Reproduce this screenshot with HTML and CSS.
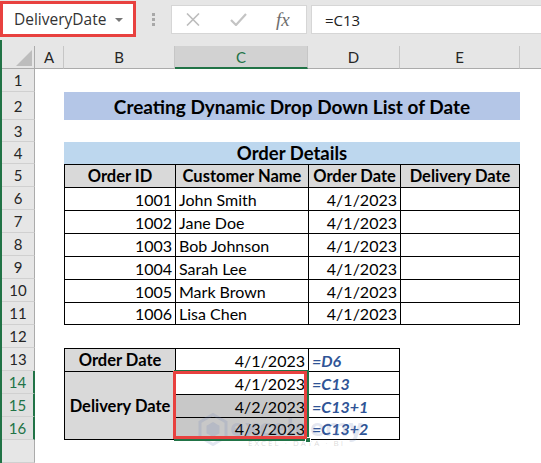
FILE: index.html
```html
<!DOCTYPE html>
<html lang="en">
<head>
<meta charset="utf-8">
<title>Dynamic Drop Down List of Date</title>
<link rel="stylesheet" href="styles.css">
</head>
<body>
<div class="app">
  <div class="fbar">
    <div class="namebox"><span class="nb-text">DeliveryDate</span><span class="nb-arrow"></span></div>
    <div class="grip"><i></i><i></i><i></i></div>
    <div class="btns">
      <svg class="ic-x" width="14" height="13" viewBox="0 0 14 13"><path d="M1 0.5 L13 12.5 M13 0.5 L1 12.5" stroke="#BDBDBD" stroke-width="1.6" fill="none"/></svg>
      <svg class="ic-ok" width="17" height="13" viewBox="0 0 17 13"><path d="M1 7 L6 12 L16 1" stroke="#C4C4C4" stroke-width="2.2" fill="none"/></svg>
      <span class="fx">fx</span>
    </div>
    <div class="finput">=C13</div>
  </div>
  <div class="sheet">
    <div class="grid">
      <!-- column headers -->
      <div class="ch corner"><span class="tri"></span></div>
      <div class="ch">A</div>
      <div class="ch">B</div>
      <div class="ch on">C</div>
      <div class="ch">D</div>
      <div class="ch">E</div>
      <div class="ch last"></div>

      <!-- row 1 -->
      <div class="rh">1</div><div class="span6"></div>
      <!-- row 2 -->
      <div class="rh">2</div><div></div>
      <div class="title span4">Creating Dynamic Drop Down List of Date</div><div></div>
      <!-- row 3 -->
      <div class="rh">3</div><div class="span6"></div>
      <!-- row 4 -->
      <div class="rh">4</div><div></div>
      <div class="subtitle span4">Order Details</div><div></div>
      <!-- row 5 -->
      <div class="rh">5</div><div></div>
      <div class="th b">Order ID</div>
      <div class="th b">Customer Name</div>
      <div class="th b">Order Date</div>
      <div class="th b br">Delivery Date</div>
      <div></div>
      <!-- rows 6-11 -->
      <div class="rh">6</div><div></div>
      <div class="b r">1001</div><div class="b">John Smith</div><div class="b r">4/1/2023</div><div class="b br"></div><div></div>
      <div class="rh">7</div><div></div>
      <div class="b r">1002</div><div class="b">Jane Doe</div><div class="b r">4/1/2023</div><div class="b br"></div><div></div>
      <div class="rh">8</div><div></div>
      <div class="b r">1003</div><div class="b">Bob Johnson</div><div class="b r">4/1/2023</div><div class="b br"></div><div></div>
      <div class="rh">9</div><div></div>
      <div class="b r">1004</div><div class="b">Sarah Lee</div><div class="b r">4/1/2023</div><div class="b br"></div><div></div>
      <div class="rh">10</div><div></div>
      <div class="b r">1005</div><div class="b">Mark Brown</div><div class="b r">4/1/2023</div><div class="b br"></div><div></div>
      <div class="rh">11</div><div></div>
      <div class="b bb r">1006</div><div class="b bb">Lisa Chen</div><div class="b bb r">4/1/2023</div><div class="b br bb"></div><div></div>
      <!-- row 12 -->
      <div class="rh">12</div><div class="span6"></div>
      <!-- row 13 -->
      <div class="rh">13</div><div></div>
      <div class="th b">Order Date</div>
      <div class="b r">4/1/2023</div>
      <div class="b br fm">=D6</div>
      <div class="span2"></div>
      <!-- row 14 -->
      <div class="rh on">14</div><div></div>
      <div class="th b bb merge3">Delivery Date</div>
      <div class="b r">4/1/2023</div>
      <div class="b br fm">=C13</div>
      <div class="span2"></div>
      <!-- row 15 -->
      <div class="rh on">15</div><div></div>
      <div class="b r sel">4/2/2023</div>
      <div class="b br fm">=C13+1</div>
      <div class="span2"></div>
      <!-- row 16 -->
      <div class="rh on">16</div><div></div>
      <div class="b bb r sel">4/3/2023</div>
      <div class="b br bb fm">=C13+2</div>
      <div class="span2"></div>
      <!-- row 17 -->
      <div class="rh"></div><div class="span6"></div>

      <!-- overlays -->
      <div class="watermark">
        <svg width="30" height="33" viewBox="0 0 30 33"><path d="M15 1.5 L28 9 L28 24 L15 31.5 L2 24 L2 9 Z" fill="none" stroke="currentColor" stroke-width="3"/><path d="M15 9 L21.5 12.8 L21.5 20.2 L15 24 L8.5 20.2 L8.5 12.8 Z" fill="currentColor"/></svg>
        <div class="wm-text"><span class="wm-name">exceldemy</span><span class="wm-tag">EXCEL · DATA · BI</span></div>
      </div>
      <div class="selection"></div>
      <div class="handle"></div>
      <div class="redbox"></div>
    </div>
  </div>
</div>
</body>
</html>
```

FILE: styles.css
```css
* { box-sizing: border-box; margin: 0; padding: 0; }
html, body { width: 541px; height: 463px; overflow: hidden; background: #fff; }
body { font-family: Lato, "Liberation Sans", sans-serif; color: #000; }

/* formula bar */
.fbar { height: 40px; background: #E6E6E6; display: flex; align-items: flex-start; }
.namebox {
  width: 136px; height: 36px; margin-top: 1px;
  border: 3px solid #E8413F; background: #fff;
  display: flex; align-items: center; justify-content: space-between;
  padding: 0 10px 0 11px;
}
.nb-text { font-family: "Open Sans", sans-serif; font-size: 15.5px; color: #333; }
.nb-arrow { width: 0; height: 0; border-left: 4px solid transparent; border-right: 4px solid transparent; border-top: 4px solid #777; margin-top: 2px; }
.grip { width: 35px; display: flex; flex-direction: column; align-items: center; gap: 2px; padding-top: 13px; }
.grip i { display: block; width: 3px; height: 3px; background: #A8A8A8; }
.btns {
  margin-top: 5px; width: 136px; height: 29px; background: #fff;
  border: 1px solid #D6D6D6; display: flex; align-items: center; padding-left: 14px;
}
.ic-ok { margin-left: 30px; }
.fx { margin-left: 29px; font-family: "Liberation Serif", serif; font-style: italic; font-size: 19px; color: #6E6E6E; line-height: 1; }
.finput {
  margin-top: 5px; margin-left: 4px; flex: 1; height: 29px; background: #fff;
  border: 1px solid #D6D6D6; border-right: none;
  font-family: "Open Sans", sans-serif; font-size: 15px; color: #222;
  display: flex; align-items: center; padding-left: 13px;
}

/* sheet */
.sheet { height: 423px; background: #E6E6E6; border-left: 2px solid #217346; padding-top: 6px; }
.grid {
  position: relative;
  display: grid;
  grid-template-columns: 33px 29px 111px 133px 92px 120px 1fr;
  grid-template-rows: 23px 23px 28px 22px 22px repeat(12, 23px) 23px;
  background: #fff; font-size: 16px;
}
.grid > div { display: flex; align-items: center; padding: 0 3px; white-space: nowrap; min-width: 0; }

.grid > .ch { background: #E6E6E6; border-right: 1px solid #C6C6C6; border-bottom: 1px solid #ABABAB; justify-content: center; color: #262626; font-size: 15px; }
.grid > .ch.on { background: #D2D2D2; border-bottom: 2px solid #217346; color: #217346; }
.grid > .ch.last { border-right: none; }
.grid > .corner { justify-content: flex-end; align-items: flex-end; padding: 0 2px 2px 0; border-right-color: #ABABAB; }
.tri { width: 0; height: 0; border-left: 16px solid transparent; border-bottom: 16px solid #BDBDBD; }

.grid > .rh { background: #E6E6E6; border-right: 1px solid #ABABAB; border-bottom: 1px solid #D0D0D0; justify-content: center; color: #262626; font-size: 15px; }
.grid > .rh.on { background: #E0E0E0; border-right: 2px solid #217346; color: #217346; }

.span6 { grid-column: span 6; }
.span4 { grid-column: span 4; }
.span2 { grid-column: span 2; }
.merge3 { grid-row: span 3; }

.grid > .title { background: #B4C6E7; font-weight: 700; font-size: 19px; justify-content: center; }
.grid > .subtitle { background: #BDD7EE; font-weight: 700; font-size: 18.5px; justify-content: center; }
.grid > .th { background: #D9D9D9; font-weight: 700; font-size: 16.5px; justify-content: center; }

.b { border-left: 1px solid #000; border-top: 1px solid #000; }
.br { border-right: 1px solid #000; }
.bb { border-bottom: 1px solid #000; }
.grid > .r { justify-content: flex-end; }
.grid > .sel { background: #C8C8C8; }
.fm { color: #2F5496; font-weight: 700; font-style: italic; }

/* overlays */
.grid > .watermark {
  position: absolute; left: 196px; top: 367px; padding: 0;
  color: rgba(110, 130, 185, 0.2); align-items: flex-start; gap: 2px; pointer-events: none;
}
.grid > .watermark .wm-text { display: flex; flex-direction: column; align-items: center; }
.wm-name { font-family: "Open Sans", sans-serif; font-weight: 700; font-size: 24px; line-height: 28px; letter-spacing: 0.5px; }
.wm-tag { font-family: "Open Sans", sans-serif; font-size: 8px; letter-spacing: 2px; line-height: 8px; margin-top: -2px; color: rgba(120, 120, 120, 0.28); }
.grid > .selection { position: absolute; left: 172px; top: 324px; width: 135px; height: 71px; border: 2px solid #217346; padding: 0; }
.grid > .handle { position: absolute; left: 303px; top: 391px; width: 6px; height: 6px; background: #217346; border: 1px solid #fff; padding: 0; }
.grid > .redbox { position: absolute; left: 171px; top: 325px; width: 134px; height: 68px; border: 3px solid #E8413F; padding: 0; }
```
